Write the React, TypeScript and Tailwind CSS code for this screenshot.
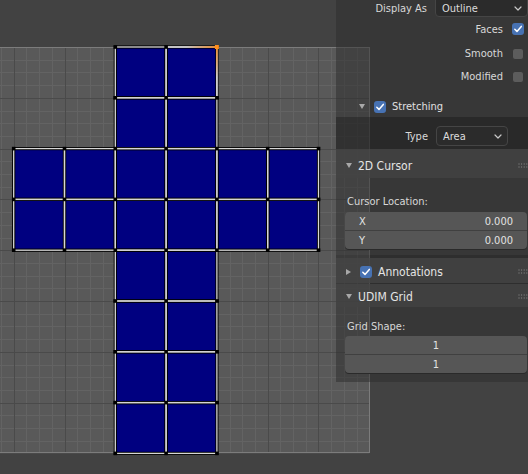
import React from "react";

const C = 50.8;
const X0 = -37.1;
const Y0 = 47;

function UVCanvas() {
  const gx1 = X0 + 8 * C;
  const gy1 = Y0 + 8 * C;
  const minorV: number[] = [];
  const majorV: number[] = [];
  const minorH: number[] = [];
  const majorH: number[] = [];
  for (let i = 0; i <= 32; i++) {
    const x = Math.round(X0 + (i * C) / 4) + 0.5;
    const y = Math.round(Y0 + (i * C) / 4) + 0.5;
    if (i % 4 === 0) {
      majorV.push(x);
      majorH.push(y);
    } else {
      minorV.push(x);
      minorH.push(y);
    }
  }
  const faces: [number, number][] = [];
  for (const r of [0, 1, 4, 5, 6, 7]) for (const c of [2, 3]) faces.push([c, r]);
  for (const r of [2, 3]) for (let c = 0; c < 6; c++) faces.push([c, r]);
  const fx = (c: number) => X0 + (c + 1) * C;
  const fy = (r: number) => Y0 + r * C;
  const verts = new Map<string, [number, number]>();
  faces.forEach(([c, r]) => {
    [[c, r], [c + 1, r], [c, r + 1], [c + 1, r + 1]].forEach(([a, b]) => {
      verts.set(`${a},${b}`, [fx(a), fy(b)]);
    });
  });
  const ox = fx(4);
  const oy = fy(0);
  return (
    <svg width="528" height="474" className="block">
      <defs>
        <linearGradient id="gTop" gradientUnits="userSpaceOnUse" x1={ox} y1={oy} x2={fx(3)} y2={oy}>
          <stop offset="0" stopColor="#ff8d1c" />
          <stop offset="0.35" stopColor="#e8b07a" />
          <stop offset="0.6" stopColor="#d6d6d6" />
        </linearGradient>
        <linearGradient id="gRight" gradientUnits="userSpaceOnUse" x1={ox} y1={oy} x2={ox} y2={fy(1)}>
          <stop offset="0" stopColor="#ff8d1c" />
          <stop offset="0.35" stopColor="#e8b07a" />
          <stop offset="0.6" stopColor="#d6d6d6" />
        </linearGradient>
      </defs>
      <rect x="0" y="0" width="528" height="474" fill="#424242" />
      <rect x={X0} y={Y0} width={gx1 - X0} height={gy1 - Y0} fill="#595959" />
      <g shapeRendering="crispEdges" strokeWidth="1">
        {minorV.map((x) => (
          <line key={"mv" + x} x1={x} y1={Y0} x2={x} y2={gy1} stroke="#636363" />
        ))}
        {minorH.map((y) => (
          <line key={"mh" + y} x1={X0} y1={y} x2={gx1} y2={y} stroke="#636363" />
        ))}
        {majorV.map((x) => (
          <line key={"Mv" + x} x1={x} y1={Y0} x2={x} y2={gy1} stroke="#4a4a4a" />
        ))}
        {majorH.map((y) => (
          <line key={"Mh" + y} x1={X0} y1={y} x2={gx1} y2={y} stroke="#4a4a4a" />
        ))}
        <rect x={X0} y={Y0 + 0.5} width={gx1 - X0} height={gy1 - Y0 - 1} fill="none" stroke="#7c7c7c" />
      </g>
      {faces.map(([c, r]) => (
        <rect key={`f${c}-${r}`} x={fx(c)} y={fy(r)} width={C} height={C} fill="#000080" />
      ))}
      {faces.map(([c, r]) => (
        <rect key={`b${c}-${r}`} x={fx(c)} y={fy(r)} width={C} height={C} fill="none" stroke="#000" strokeWidth="3.2" />
      ))}
      {faces.map(([c, r]) => (
        <rect key={`w${c}-${r}`} x={fx(c)} y={fy(r)} width={C} height={C} fill="none" stroke="#d6d6d6" strokeWidth="1.3" />
      ))}
      <line x1={ox} y1={oy} x2={fx(3)} y2={oy} stroke="url(#gTop)" strokeWidth="1.5" />
      <line x1={ox} y1={oy} x2={ox} y2={fy(1)} stroke="url(#gRight)" strokeWidth="1.5" />
      {Array.from(verts.values()).map(([x, y]) => (
        <rect key={`v${x}-${y}`} x={x - 1.8} y={y - 1.8} width="3.6" height="3.6" fill="#000" />
      ))}
      <rect x={ox - 2} y={oy - 2} width="4" height="4" fill="#ff8d1c" />
    </svg>
  );
}

function Check({ on }: { on: boolean }) {
  if (on)
    return (
      <div className="w-[12px] h-[12px] shrink-0 rounded-[3px] bg-[#4772b3] flex items-center justify-center">
        <svg width="10" height="10" viewBox="0 0 10 10">
          <path d="M1.8 5.2 L4 7.4 L8.3 2.4" stroke="#ffffff" strokeWidth="1.5" fill="none" strokeLinecap="round" strokeLinejoin="round" />
        </svg>
      </div>
    );
  return <div className="w-[12px] h-[12px] shrink-0 rounded-[3px] bg-[#5c5c5c] border border-[#363636]" />;
}

function Chevron() {
  return (
    <svg width="8" height="5" viewBox="0 0 8 5" className="shrink-0">
      <path d="M1 1 L4 4 L7 1" stroke="#c8c8c8" strokeWidth="1.2" fill="none" strokeLinecap="round" strokeLinejoin="round" />
    </svg>
  );
}

function TriDown() {
  return (
    <svg width="6" height="5" viewBox="0 0 6 5" className="shrink-0">
      <path d="M0 0 L6 0 L3 5 Z" fill="#a8a8a8" />
    </svg>
  );
}

function TriRight() {
  return (
    <svg width="5" height="6" viewBox="0 0 5 6" className="shrink-0">
      <path d="M0 0 L5 3 L0 6 Z" fill="#a8a8a8" />
    </svg>
  );
}

function Grip() {
  const dots: [number, number][] = [];
  for (let i = 0; i < 4; i++) for (let j = 0; j < 2; j++) dots.push([i * 2.6, j * 3]);
  return (
    <svg width="10" height="5" viewBox="0 0 10 5" className="shrink-0">
      {dots.map(([x, y]) => (
        <rect key={`${x}-${y}`} x={x + 0.5} y={y + 0.5} width="1" height="1" fill="#8c8c8c" />
      ))}
    </svg>
  );
}

function PanelHeader({ title, h, open, check, pt }: { title: string; h: string; open: boolean; check?: boolean; pt: string }) {
  return (
    <div className={`${h} ${pt} flex items-center bg-[rgba(64,64,64,0.88)] pl-[10px]`}>
      {open ? <TriDown /> : <TriRight />}
      {check ? (
        <div className={`flex items-center ${open ? "ml-[8px]" : "ml-[9px]"}`}>
          <Check on />
          <span className="ml-[6px] text-[12px] text-[#e4e4e4]">{title}</span>
        </div>
      ) : (
        <span className="ml-[6px] text-[12px] text-[#e4e4e4]">{title}</span>
      )}
      <div className="ml-auto">
        <Grip />
      </div>
    </div>
  );
}

function Field({ rows }: { rows: { label?: string; value: string }[] }) {
  return (
    <div className="ml-[9px] w-[182px] rounded-[4px] bg-[#565656] overflow-hidden shadow-[0_1px_0_#2a2a2a] text-[11px] text-[#e2e2e2]">
      {rows.map((r, i) => (
        <div
          key={i}
          className={`flex items-center px-[14px] ${i === 0 ? "h-[18px]" : "h-[19px] border-t border-[#404040]"} ${r.label ? "justify-between" : "justify-center"}`}
        >
          {r.label && <span>{r.label}</span>}
          <span>{r.value}</span>
        </div>
      ))}
    </div>
  );
}

function Sidebar() {
  return (
    <div className="absolute top-0 right-0 w-[192px] flex flex-col text-[11px] leading-none text-[#d8d8d8]">
      <div className="flex flex-col bg-[rgba(44,44,44,0.5)]">
        <div className="-mt-[4px] h-[21px] flex items-center">
          <span className="w-[92px] text-right pt-[4px]">Display As</span>
          <div className="ml-[8px] w-[94px] h-[21px] rounded-[4px] bg-[#2b2b2b] border border-[#454545] flex items-center pl-[6px] pr-[5px] pt-[3px]">
            <span className="text-[#dcdcdc]">Outline</span>
            <div className="ml-auto">
              <Chevron />
            </div>
          </div>
        </div>
        <div className="h-[24px] flex items-center justify-end pr-[4px] gap-[9px]">
          <span>Faces</span>
          <Check on />
        </div>
        <div className="h-[25px] flex items-center justify-end pr-[4px] gap-[9px]">
          <span>Smooth</span>
          <Check on={false} />
        </div>
        <div className="h-[21px] flex items-center justify-end pr-[4px] gap-[9px]">
          <span>Modified</span>
          <Check on={false} />
        </div>
        <div className="h-[9px]" />
        <div className="h-[21px] flex items-center pl-[23px]">
          <TriDown />
          <div className="ml-[9px]">
            <Check on />
          </div>
          <span className="ml-[6px] text-[#e0e0e0]">Stretching</span>
        </div>
        <div className="h-[32px] pt-[9px] bg-[rgba(18,18,18,0.35)] flex items-start">
          <span className="w-[92px] text-right h-[20px] flex items-center justify-end">Type</span>
          <div className="ml-[8px] w-[72px] h-[20px] rounded-[4px] bg-[#2b2b2b] border border-[#454545] flex items-center pl-[6px] pr-[5px]">
            <span className="text-[#dcdcdc]">Area</span>
            <div className="ml-auto">
              <Chevron />
            </div>
          </div>
        </div>
      </div>
      <PanelHeader title="2D Cursor" h="h-[29px]" pt="pt-[4px]" open />
      <div className="h-[77px] bg-[rgba(44,44,44,0.5)] flex flex-col">
        <div className="pt-[18px] pl-[11px] h-[30px]">Cursor Location:</div>
        <div className="mt-[4px]">
          <Field rows={[{ label: "X", value: "0.000" }, { label: "Y", value: "0.000" }]} />
        </div>
      </div>
      <div className="h-[3px] bg-[rgba(22,22,22,0.45)]" />
      <PanelHeader title="Annotations" h="h-[25px]" pt="pt-[2px]" open={false} check />
      <div className="h-[1px] bg-[rgba(22,22,22,0.45)]" />
      <PanelHeader title="UDIM Grid" h="h-[23px]" pt="pt-[2px]" open />
      <div className="h-[75px] bg-[rgba(44,44,44,0.5)] flex flex-col">
        <div className="pt-[14px] pl-[11px] h-[29px]">Grid Shape:</div>
        <Field rows={[{ value: "1" }, { value: "1" }]} />
      </div>
    </div>
  );
}

export default function App() {
  return (
    <div className="relative w-[528px] h-[474px] overflow-hidden bg-[#424242] font-['DejaVu_Sans_Condensed','DejaVu_Sans',sans-serif] font-stretch-condensed">
      <UVCanvas />
      <Sidebar />
    </div>
  );
}
